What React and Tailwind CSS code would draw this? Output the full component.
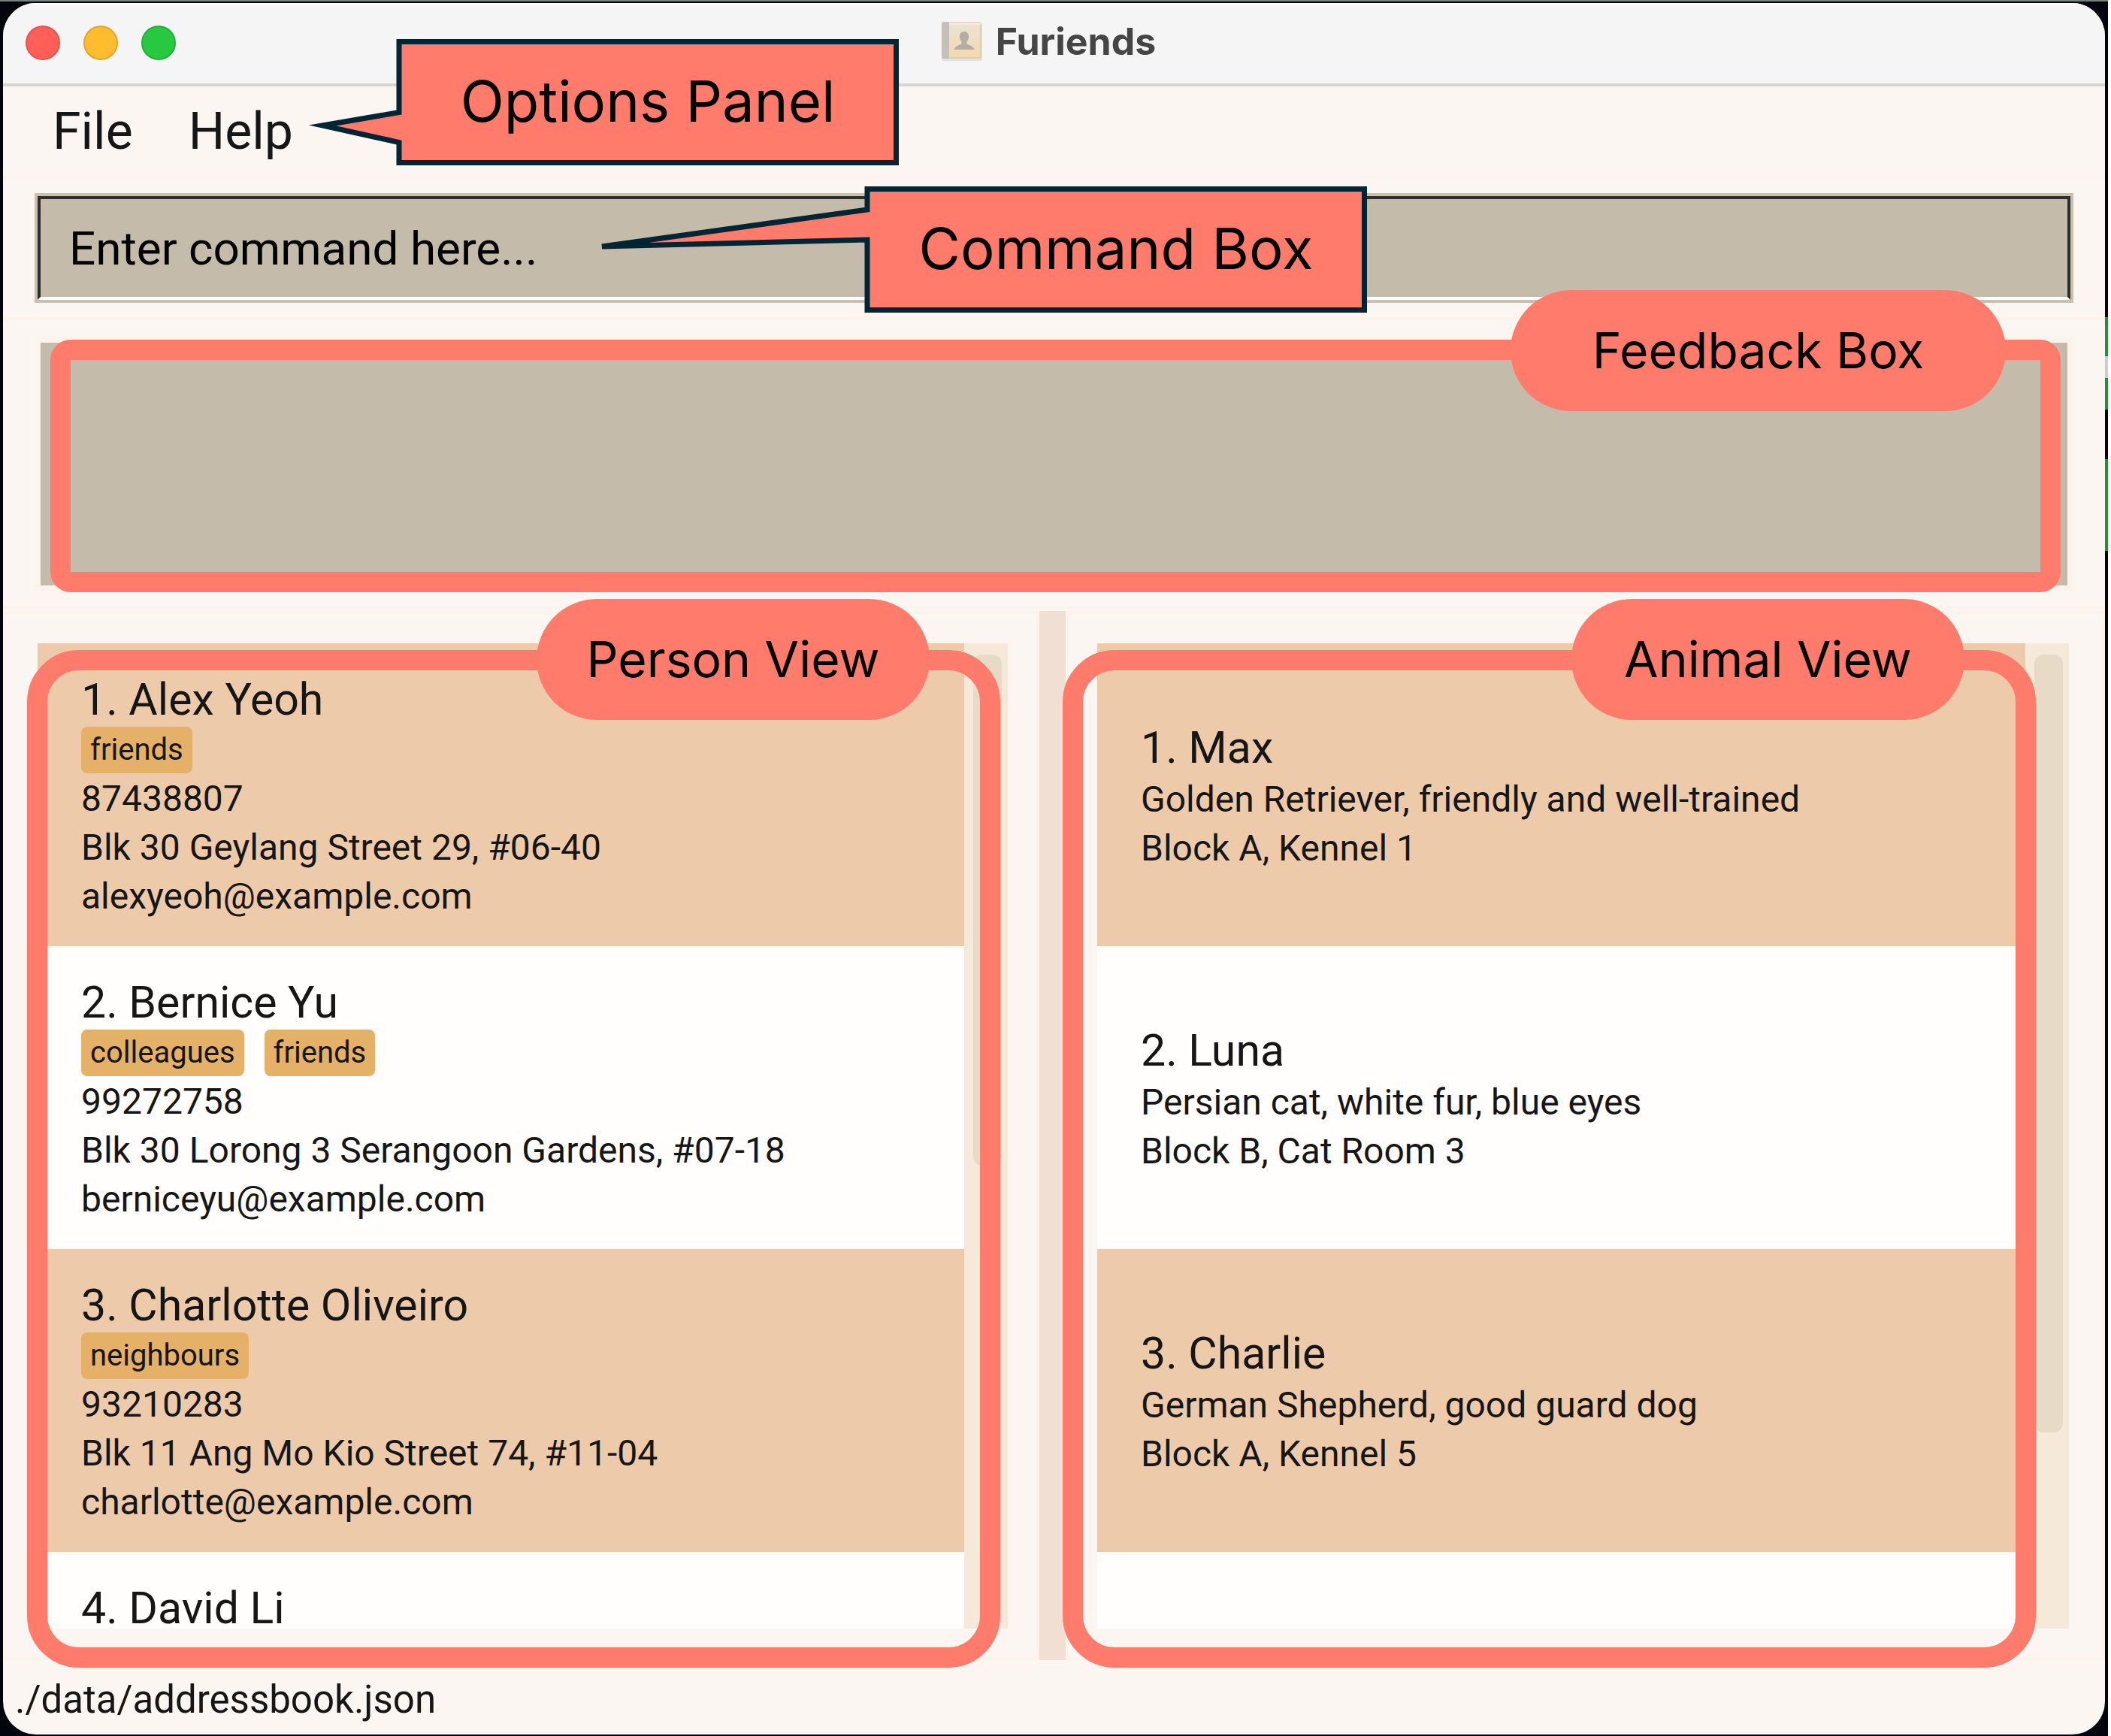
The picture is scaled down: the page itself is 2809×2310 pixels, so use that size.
const persons = [
  {
    name: "1. Alex Yeoh",
    tags: ["friends"],
    lines: ["87438807", "Blk 30 Geylang Street 29, #06-40", "alexyeoh@example.com"],
  },
  {
    name: "2. Bernice Yu",
    tags: ["colleagues", "friends"],
    lines: ["99272758", "Blk 30 Lorong 3 Serangoon Gardens, #07-18", "berniceyu@example.com"],
  },
  {
    name: "3. Charlotte Oliveiro",
    tags: ["neighbours"],
    lines: ["93210283", "Blk 11 Ang Mo Kio Street 74, #11-04", "charlotte@example.com"],
  },
  { name: "4. David Li", tags: [], lines: [] },
];

const animals = [
  { name: "1. Max", lines: ["Golden Retriever, friendly and well-trained", "Block A, Kennel 1"] },
  { name: "2. Luna", lines: ["Persian cat, white fur, blue eyes", "Block B, Cat Room 3"] },
  { name: "3. Charlie", lines: ["German Shepherd, good guard dog", "Block A, Kennel 5"] },
  { name: "", lines: [] },
];

function BookIcon() {
  return (
    <svg viewBox="0 0 54 52" className="h-[52px] w-[54px]" aria-hidden="true">
      <defs>
        <linearGradient id="cover" x1="0" y1="0" x2="0" y2="1">
          <stop offset="0" stopColor="#ece2d2" />
          <stop offset="1" stopColor="#f3d9ae" />
        </linearGradient>
      </defs>
      <rect x="0" y="2" width="54" height="50" rx="3" fill="#e4e2df" />
      <rect x="0" y="0" width="53" height="49" rx="3" fill="#dfcdae" />
      <rect x="9" y="4" width="42" height="43" fill="url(#cover)" />
      <rect x="2" y="1" width="50" height="3" rx="1" fill="#f3ead9" />
      <path d="M3 0h7v49H3a3 3 0 0 1-3-3V3a3 3 0 0 1 3-3z" fill="#c6bfbb" />
      <path
        d="M30 13c3.600 0 6 2.600 6 6.500 0 3-1 5.300-2.500 6.800v3c0 1.200 9.500 2.500 10 7.700H16.500c.5-5.200 10-6.500 10-7.700v-3C25 24.800 24 22.500 24 19.500c0-3.900 2.400-6.500 6-6.500z"
        fill="#b5ada3"
      />
    </svg>
  );
}

function TitleBar() {
  return (
    <header className="grid h-[111px] shrink-0 grid-cols-[1fr_auto_1fr] items-center border-t-2 border-b-4 border-t-white border-b-[#dad4d0] bg-[#f5f5f5] pr-11 pb-1 pl-[30px]">
      <div className="flex gap-[31px]">
        <button aria-label="Close" className="size-[46px] rounded-full border-2 border-[#e9524a] bg-[#ff5f57]" />
        <button aria-label="Minimise" className="size-[46px] rounded-full border-2 border-[#e5a526] bg-[#febc2e]" />
        <button aria-label="Zoom" className="size-[46px] rounded-full border-2 border-[#1fb134] bg-[#28c840]" />
      </div>
      <div className="flex items-center gap-[18px] pb-1">
        <BookIcon />
        <h1 className="font-['Inter',sans-serif] text-[50px] leading-[60px] font-bold text-[#454545]">Furiends</h1>
      </div>
    </header>
  );
}

function OptionsCallout() {
  return (
    <div className="pointer-events-none absolute -top-[63px] left-[406px] z-20 h-[168px] w-[786px]">
      <svg viewBox="0 0 786 168" className="absolute inset-0 size-full" aria-hidden="true">
        <path
          d="M121 3.500H782.500V164.500H121V137.500L19 115L121 97.500Z"
          fill="#ff7b6b"
          stroke="#022534"
          strokeWidth="7"
          strokeMiterlimit="10"
        />
      </svg>
      <span className="relative ml-[118px] flex h-full items-center justify-center pb-1 font-['Inter',sans-serif] text-[76px] text-black">
        Options Panel
      </span>
    </div>
  );
}

function CommandCallout() {
  return (
    <div className="pointer-events-none absolute -top-[9px] left-[751px] z-20 h-[168px] w-[1022px]">
      <svg viewBox="0 0 1022 168" className="absolute inset-0 size-full" aria-hidden="true">
        <path
          d="M357 3.500H1018.500V164.500H357V71L4 80L357 31Z"
          fill="#ff7b6b"
          stroke="#022534"
          strokeWidth="7"
          strokeMiterlimit="4"
        />
      </svg>
      <span className="relative ml-[354px] flex h-full items-center justify-center pb-1 font-['Inter',sans-serif] text-[76px] text-black">
        Command Box
      </span>
    </div>
  );
}

function Pill({ className, children }) {
  return (
    <div
      className={`absolute z-10 flex h-[161px] items-center justify-center rounded-full bg-[#ff7b6b] font-['Inter',sans-serif] text-[66px] text-black ${className}`}
    >
      {children}
    </div>
  );
}

function MenuBar() {
  return (
    <nav className="relative flex h-[123px] shrink-0 items-center gap-[74px] border-b-4 border-[#faf4ec] pl-[66px] text-[68px] leading-[80px]">
      <button>File</button>
      <button>Help</button>
      <OptionsCallout />
    </nav>
  );
}

function CommandBox() {
  return (
    <form className="relative mt-[19px] mr-[42px] ml-[42px] shrink-0 bg-[#cbc0ae] p-1">
      <input
        type="text"
        aria-label="Command"
        placeholder="Enter command here..."
        className="block h-[138px] w-full border-4 border-[#2e2e30] border-b-white bg-[#c5bbab] pr-4 pl-[38px] text-[62px] outline-none placeholder:text-black placeholder:opacity-100"
      />
      <CommandCallout />
    </form>
  );
}

function FeedbackBox() {
  return (
    <section aria-label="Feedback" className="relative mt-[29px] mr-[50px] ml-[50px] h-[323px] shrink-0 bg-[#c5bbab] outline-8 outline-[#fbf4ec]">
      <div className="absolute -top-1 right-[9px] -bottom-[9px] left-[13px] rounded-[27px] border-[27px] border-[#ff7b6b]" />
      <Pill className="-top-[70px] right-[82px] w-[659px]">Feedback Box</Pill>
    </section>
  );
}

function Card({ item, centered }) {
  return (
    <li
      className={`flex h-[403px] shrink-0 flex-col pl-[58px] odd:bg-[#edcaaa] even:bg-[#fffefd] ${centered ? "justify-center pt-4" : "pt-[50px]"}`}
    >
      <h2 className="mb-[11px] text-[59px] leading-[50px]">{item.name}</h2>
      {item.tags && item.tags.length > 0 && (
        <div className="mb-px flex gap-[27px]">
          {item.tags.map((tag) => (
            <span key={tag} className="rounded-lg bg-[#e5b067] px-3 text-[40px] leading-[62px]">
              {tag}
            </span>
          ))}
        </div>
      )}
      {item.lines.map((line) => (
        <p key={line} className="text-[48px] leading-[65px]">
          {line}
        </p>
      ))}
    </li>
  );
}

function ListPanel({ items, centered, label, className, thumb, frame, pill }) {
  return (
    <section aria-label={label} className={`flex min-h-0 border-4 border-[#faf4eb] pt-[39px] pb-[38px] ${className}`}>
      <div className="relative flex min-h-0 flex-1">
        <ul className="flex min-w-0 flex-1 flex-col overflow-hidden">
          {items.map((item, i) => (
            <Card key={i} item={item} centered={centered} />
          ))}
        </ul>
        <div className="w-[58px] bg-[#f5ead9] pt-[15px] pr-2 pl-3">
          <div className={`rounded-xl bg-[#e7dbc8] ${thumb}`} />
        </div>
        <div className={`absolute top-[9px] -bottom-[52px] rounded-[69px] border-[27px] border-[#ff7b6b] ${frame}`} />
        <Pill className={`-top-[59px] w-[523px] ${pill}`}>{label}</Pill>
      </div>
    </section>
  );
}

export default function App() {
  return (
    <div className="mr-1 flex h-screen border-t-2 border-[#76817c] bg-[#02060c] pt-[2px] pb-[2px] pl-1 font-['Roboto',sans-serif] text-[#161616]">
      <div className="flex min-w-0 flex-1 flex-col overflow-hidden rounded-[44px] bg-[#fbf6f2]">
        <TitleBar />
        <MenuBar />
        <CommandBox />
        <div className="mt-[18px] h-[6px] shrink-0 bg-[#faf4ec]" />
        <FeedbackBox />
        <div className="mt-[27px] h-1 shrink-0 bg-[#faf4ec]" />
        <main className="mt-[3px] grid min-h-0 flex-1 grid-cols-[1379fr_35px_1383fr] grid-rows-[minmax(0,1fr)]">
          <ListPanel
            items={persons}
            label="Person View"
            className="pr-[38px] pl-[42px]"
            thumb="h-[680px]"
            frame="-left-[14px] right-[10px]"
            pill="right-[104px]"
          />
          <div className="bg-[#f1dfd3]" />
          <ListPanel
            items={animals}
            centered
            label="Animal View"
            className="pr-11 pl-[38px]"
            thumb="h-[1035px]"
            frame="-left-[46px] right-11"
            pill="right-[139px]"
          />
        </main>
        <footer className="h-[99px] shrink-0 pt-[23px] pl-4 text-[51px] leading-[60px]">./data/addressbook.json</footer>
      </div>
      <div className="w-1 shrink-0 bg-[linear-gradient(#02060c_0_418px,#2c8a3c_418px_470px,#c9cdd1_470px_499px,#2c8a3c_499px_541px,#02060c_541px_607px,#2c8a3c_607px_729px,#02060c_729px)]" />
    </div>
  );
}
